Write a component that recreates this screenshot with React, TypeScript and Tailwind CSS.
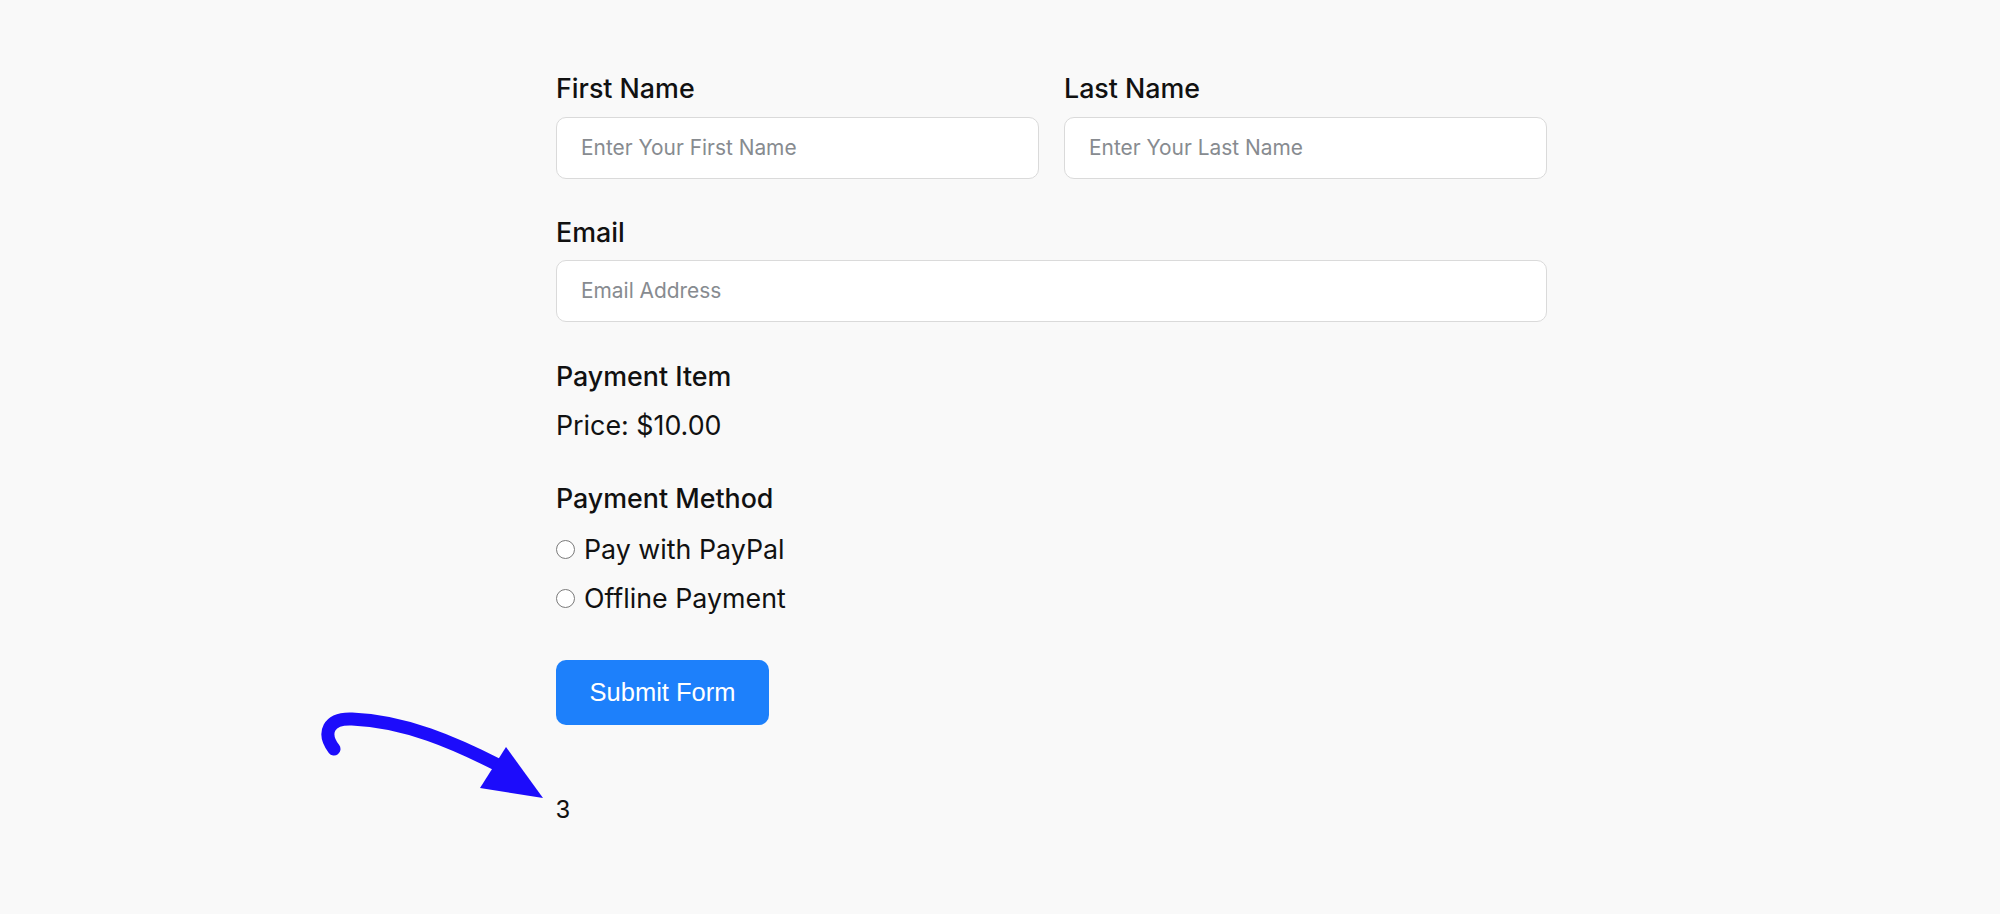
import React from "react";

const Radio = ({ label }: { label: string }) => (
  <label className="flex items-center h-[32px]">
    <span className="w-[19px] h-[19px] rounded-full border border-[#7a7a7a] bg-white shrink-0" />
    <span className="ml-[9px] text-[26.8px] leading-[32px] text-[#111]">{label}</span>
  </label>
);

export default function App() {
  return (
    <div className="w-[2000px] h-[914px] bg-[#f9f9f9] relative overflow-hidden" style={{ fontFamily: "Inter, 'Noto Sans', sans-serif" }}>
      <div className="ml-[556px] w-[991px] pt-[72px]">
        <div className="flex gap-[25px]">
          <div className="flex-1">
            <div className="text-[26.8px] leading-[32px] font-medium text-[#111]">First Name</div>
            <div className="mt-[13px] h-[62px] rounded-[10px] border border-[#dadada] bg-white flex items-center pl-[24px] text-[20.9px] text-[#878b90]">
              Enter Your First Name
            </div>
          </div>
          <div className="flex-1">
            <div className="text-[26.8px] leading-[32px] font-medium text-[#111]">Last Name</div>
            <div className="mt-[13px] h-[62px] rounded-[10px] border border-[#dadada] bg-white flex items-center pl-[24px] text-[20.9px] text-[#878b90]">
              Enter Your Last Name
            </div>
          </div>
        </div>

        <div className="mt-[37px] text-[26.8px] leading-[32px] font-medium text-[#111]">Email</div>
        <div className="mt-[12px] h-[62px] rounded-[10px] border border-[#dadada] bg-white flex items-center pl-[24px] text-[20.9px] text-[#878b90]">
          Email Address
        </div>

        <div className="mt-[38px] text-[26.8px] leading-[32px] font-medium text-[#111]">Payment Item</div>
        <div className="mt-[17px] text-[26.8px] leading-[32px] text-[#111]">Price: $10.00</div>

        <div className="mt-[41px] text-[26.8px] leading-[32px] font-medium text-[#111]">Payment Method</div>
        <div className="mt-[19px] flex flex-col gap-[17px]">
          <Radio label="Pay with PayPal" />
          <Radio label="Offline Payment" />
        </div>

        <button
          className="mt-[46px] w-[213px] h-[65px] rounded-[10px] bg-[#1d80fb] text-white text-[25.5px]"
          style={{ fontFamily: "'Liberation Sans', Arial, sans-serif" }}
        >
          Submit Form
        </button>

        <div
          className="mt-[68px] text-[25px] leading-[32px] text-[#111]"
          style={{ fontFamily: "'Liberation Sans', Arial, sans-serif" }}
        >
          3
        </div>
      </div>

      <svg className="absolute left-0 top-0" width="2000" height="914" viewBox="0 0 2000 914">
        <path
          d="M 334 749 C 322 733, 328 718, 352 719 C 405 721, 455 743, 500 766"
          fill="none"
          stroke="#1c0cfb"
          strokeWidth="13"
          strokeLinecap="round"
        />
        <polygon points="506,747 480,788 543,798" fill="#1c0cfb" />
      </svg>
    </div>
  );
}
